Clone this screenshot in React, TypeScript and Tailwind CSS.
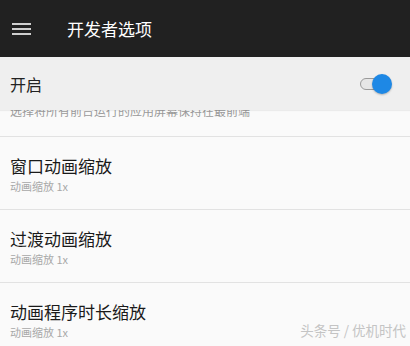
import React from 'react';

const rows = [
  { title: '窗口动画缩放', sub: '动画缩放 1x' },
  { title: '过渡动画缩放', sub: '动画缩放 1x' },
  { title: '动画程序时长缩放', sub: '动画缩放 1x' },
];

const font = { fontFamily: '"Noto Sans CJK SC", "Noto Sans", sans-serif' };

export default function App() {
  return (
    <div className="relative w-[410px] h-[346px] overflow-hidden bg-[#fafafa]" style={font}>
      {/* toolbar */}
      <div className="h-[57px] bg-[#212121] flex items-center">
        <div className="ml-[12px] w-[19px] flex flex-col gap-[3px]">
          <span className="block h-[2px] bg-[#cfcfcf]" />
          <span className="block h-[2px] bg-[#cfcfcf]" />
          <span className="block h-[2px] bg-[#cfcfcf]" />
        </div>
        <span className="ml-[36px] text-[17px] text-white">开发者选项</span>
      </div>

      {/* master switch */}
      <div className="h-[53px] bg-[#efefef] flex items-center justify-between pl-[10px] pr-[18px] relative z-10 shadow-[0_1px_1px_rgba(0,0,0,0.06)]">
        <span className="text-[16px] text-[#222]">开启</span>
        <div className="relative w-[34px] h-[20px] flex items-center">
          <div className="ml-[2px] w-[24px] h-[12px] rounded-full bg-[#e6e6e6] border border-[#9a9a9a]" />
          <div className="absolute right-0 top-0 w-[20px] h-[20px] rounded-full bg-[#1e88e5] shadow-[0_1px_2px_rgba(0,0,0,0.25)]" />
        </div>
      </div>

      {/* summary partly hidden under the switch bar */}
      <div className="h-[26px] overflow-hidden">
        <div className="-mt-[6px] pl-[10px] text-[12px] leading-[14px] text-[#9a9a9a] whitespace-nowrap">
          选择将所有前台运行的应用屏幕保持在最前端
        </div>
      </div>
      <div className="h-px bg-[#e2e2e2]" />

      {rows.map((r) => (
        <div key={r.title}>
          <div className="h-[72px] pl-[10px] pt-[19px]">
            <div className="text-[17px] leading-[20px] text-[#1a1a1a]">{r.title}</div>
            <div className="mt-[4px] text-[11px] leading-[13px] text-[#a8a8a8]">{r.sub}</div>
          </div>
          <div className="h-px bg-[#e2e2e2]" />
        </div>
      ))}

      <div className="absolute right-[4px] bottom-[6px] text-[13.5px] text-[#c4c4c4]">头条号 / 优机时代</div>
    </div>
  );
}
